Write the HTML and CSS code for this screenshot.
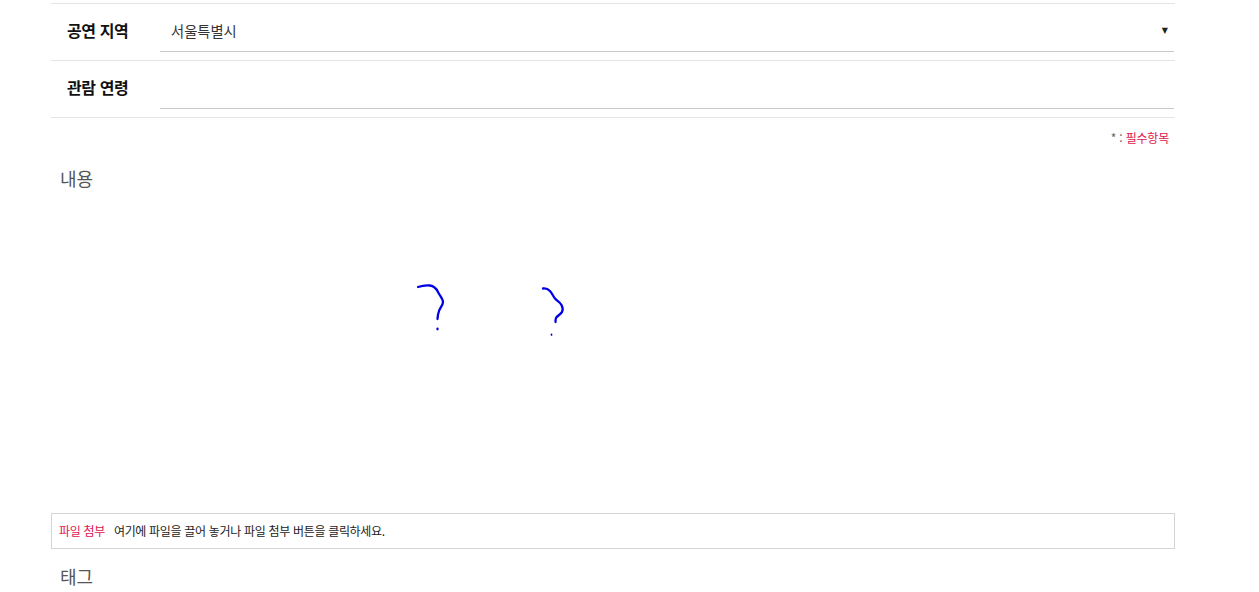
FILE: index.html
```html
<!DOCTYPE html>
<html lang="ko">
<head>
<meta charset="utf-8">
<title>공연 등록</title>
<link rel="stylesheet" href="styles.css">
</head>
<body>
<main class="form">
  <div class="row">
    <div class="label">공연 지역</div>
    <div class="field"><span class="value">서울특별시</span><span class="arrow">▼</span></div>
  </div>
  <div class="row">
    <div class="label">관람 연령</div>
    <div class="field"></div>
  </div>
  <div class="required"><span class="star">* :</span> 필수항목</div>
  <h2 class="heading content-heading">내용</h2>
  <div class="canvas">
    <svg class="drawing" width="1124" height="310" viewBox="51 200 1124 310" aria-hidden="true">
      <path d="M418 287C421 286 425 285 430 285.500C434 286 436 288 438 292C440 296 443 299 443 302C443 305 440 308 439 311C438 314 437.500 316 437.500 319" />
      <path d="M437.500 328.700v.6" />
      <path d="M543 288.500C546 288 548 289 550 291C552 293 553 296 555 298.500C557 301 560 302 561.500 305C563 308 563 310 562 312C560 315 557 316 556 318C555.500 319 555.500 320 555.500 322" />
      <path class="thin" d="M551.500 334.300v.6" />
    </svg>
  </div>
  <div class="attach"><span class="attach-label">파일 첨부</span><span class="attach-text">여기에 파일을 끌어 놓거나 파일 첨부 버튼을 클릭하세요.</span></div>
  <h2 class="heading tag-heading">태그</h2>
</main>
</body>
</html>
```

FILE: styles.css
```css
* { box-sizing: border-box; }
html, body { margin: 0; padding: 0; height: 592px; overflow: hidden; background: #fff; }
body { font-family: "Noto Sans CJK KR", "Noto Sans", sans-serif; color: #222; }
.form { width: 1124px; margin-left: 51px; padding-top: 3px; }
.row {
  display: flex;
  height: 57px;
  border-top: 1px solid #e4e4e4;
  padding-left: 109px;
  position: relative;
}
.row:nth-of-type(2) { height: 58px; border-bottom: 1px solid #e4e4e4; }
.label {
  position: absolute;
  left: 16px;
  top: 15px;
  font-size: 16px;
  line-height: 22px;
  font-weight: 700;
  letter-spacing: -0.4px;
  color: #111;
}
.field {
  flex: 1;
  height: 48px;
  border-bottom: 1px solid #c8c8c8;
  margin-right: 1px;
  display: flex;
  align-items: center;
  justify-content: space-between;
  padding: 6px 6px 0 11px;
}
.value { font-size: 14.3px; line-height: 20px; color: #333; }
.arrow { font-family: "DejaVu Sans", sans-serif; font-size: 8px; line-height: 10px; color: #222; }
.required {
  text-align: right;
  font-size: 12px;
  line-height: 16px;
  letter-spacing: -0.2px;
  color: #e0144c;
  padding: 12px 6px 0 0;
}
.star { color: #666; }
.heading {
  margin: 0;
  font-size: 18px;
  font-weight: 400;
  line-height: 26px;
  color: #555;
  padding-left: 9px;
}
.content-heading { margin-top: 19px; }
.canvas { height: 310px; margin-top: 9px; }
.drawing { display: block; }
.drawing path { fill: none; stroke: #0000e6; stroke-width: 2.3; stroke-linecap: round; stroke-linejoin: round; }
.drawing .thin { stroke-width: 1.700; }
.attach {
  height: 36px;
  margin-top: 3px;
  border: 1px solid #d4d4d4;
  display: flex;
  align-items: center;
  padding-left: 7px;
  font-size: 12px;
  line-height: 16px;
  letter-spacing: -0.32px;
}
.attach-label { color: #e0144c; }
.attach-text { color: #222; margin-left: 9px; }
.tag-heading { margin-top: 14px; }
```
